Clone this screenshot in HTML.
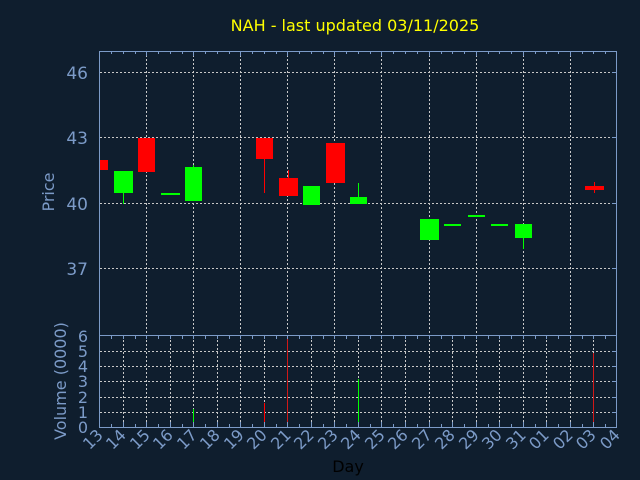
<!DOCTYPE html>
<html><head><style>
html,body{margin:0;padding:0;background:#0f1e2e;}
svg{display:block;}
text{font-family:"DejaVu Sans","Liberation Sans",sans-serif;}
</style></head><body>
<svg width="640" height="480" viewBox="0 0 640 480" xmlns="http://www.w3.org/2000/svg">
<rect width="640" height="480" fill="#0f1e2e"/>
<text x="355" y="31" fill="#ffff00" font-size="16" text-anchor="middle">NAH - last updated 03/11/2025</text>
<g stroke="#c8c8c8" stroke-width="1" stroke-dasharray="2,2" fill="none">
<line x1="100" y1="72.5" x2="617" y2="72.5"/>
<line x1="100" y1="137.5" x2="617" y2="137.5"/>
<line x1="100" y1="203.5" x2="617" y2="203.5"/>
<line x1="100" y1="268.5" x2="617" y2="268.5"/>
<line x1="146.5" y1="51" x2="146.5" y2="335"/>
<line x1="193.5" y1="51" x2="193.5" y2="335"/>
<line x1="240.5" y1="51" x2="240.5" y2="335"/>
<line x1="287.5" y1="51" x2="287.5" y2="335"/>
<line x1="334.5" y1="51" x2="334.5" y2="335"/>
<line x1="381.5" y1="51" x2="381.5" y2="335"/>
<line x1="429.5" y1="51" x2="429.5" y2="335"/>
<line x1="476.5" y1="51" x2="476.5" y2="335"/>
<line x1="523.5" y1="51" x2="523.5" y2="335"/>
<line x1="570.5" y1="51" x2="570.5" y2="335"/>
</g>
<g stroke="#c8c8c8" stroke-width="1" stroke-dasharray="2,2" fill="none">
<line x1="100" y1="351.5" x2="617" y2="351.5"/>
<line x1="100" y1="366.5" x2="617" y2="366.5"/>
<line x1="100" y1="381.5" x2="617" y2="381.5"/>
<line x1="100" y1="397.5" x2="617" y2="397.5"/>
<line x1="100" y1="412.5" x2="617" y2="412.5"/>
<line x1="123.5" y1="336" x2="123.5" y2="427"/><line x1="146.5" y1="336" x2="146.5" y2="427"/><line x1="170.5" y1="336" x2="170.5" y2="427"/><line x1="193.5" y1="336" x2="193.5" y2="427"/><line x1="217.5" y1="336" x2="217.5" y2="427"/><line x1="240.5" y1="336" x2="240.5" y2="427"/><line x1="264.5" y1="336" x2="264.5" y2="427"/><line x1="287.5" y1="336" x2="287.5" y2="427"/><line x1="311.5" y1="336" x2="311.5" y2="427"/><line x1="334.5" y1="336" x2="334.5" y2="427"/><line x1="358.5" y1="336" x2="358.5" y2="427"/><line x1="381.5" y1="336" x2="381.5" y2="427"/><line x1="405.5" y1="336" x2="405.5" y2="427"/><line x1="429.5" y1="336" x2="429.5" y2="427"/><line x1="452.5" y1="336" x2="452.5" y2="427"/><line x1="476.5" y1="336" x2="476.5" y2="427"/><line x1="499.5" y1="336" x2="499.5" y2="427"/><line x1="523.5" y1="336" x2="523.5" y2="427"/><line x1="546.5" y1="336" x2="546.5" y2="427"/><line x1="570.5" y1="336" x2="570.5" y2="427"/><line x1="593.5" y1="336" x2="593.5" y2="427"/>
</g>
<g>
<rect x="99" y="160" width="9" height="10" fill="#ff0000"/>
<line x1="123.5" y1="193" x2="123.5" y2="204" stroke="#00ff00"/><rect x="114" y="171" width="19" height="22" fill="#00ff00"/>
<rect x="138" y="138" width="17" height="34" fill="#ff0000"/>
<rect x="161" y="193" width="19" height="2" fill="#00ff00"/>
<line x1="193.5" y1="165" x2="193.5" y2="170" stroke="#00ff00"/><rect x="185" y="167" width="17" height="34" fill="#00ff00"/>
<line x1="264.5" y1="158" x2="264.5" y2="193" stroke="#ff0000"/><rect x="256" y="138" width="17" height="21" fill="#ff0000"/>
<line x1="288.5" y1="170" x2="288.5" y2="180" stroke="#ff0000"/><rect x="279" y="178" width="19" height="18" fill="#ff0000"/>
<rect x="303" y="186" width="17" height="19" fill="#00ff00"/>
<rect x="326" y="143" width="19" height="40" fill="#ff0000"/>
<line x1="358.5" y1="183" x2="358.5" y2="198" stroke="#00ff00"/><rect x="350" y="197" width="17" height="7" fill="#00ff00"/>
<rect x="420" y="219" width="19" height="21" fill="#00ff00"/>
<rect x="444" y="224" width="17" height="2" fill="#00ff00"/>
<rect x="468" y="215" width="17" height="2" fill="#00ff00"/>
<rect x="491" y="224" width="17" height="2" fill="#00ff00"/>
<line x1="523.5" y1="237" x2="523.5" y2="249" stroke="#00ff00"/><rect x="515" y="224" width="17" height="14" fill="#00ff00"/>
<line x1="594.5" y1="182" x2="594.5" y2="193" stroke="#ff0000"/><rect x="585" y="186" width="19" height="4" fill="#ff0000"/>
</g>
<g stroke-width="1">
<line x1="123.5" y1="423" x2="123.5" y2="427" stroke="#00ff00"/>
<line x1="193.5" y1="409" x2="193.5" y2="427" stroke="#00ff00"/>
<line x1="264.5" y1="403" x2="264.5" y2="427" stroke="#ff0000"/>
<line x1="287.5" y1="336" x2="287.5" y2="427" stroke="#d01818"/>
<line x1="311.5" y1="425" x2="311.5" y2="427" stroke="#00ff00"/>
<line x1="358.5" y1="379" x2="358.5" y2="427" stroke="#00ff00"/>
<line x1="429.5" y1="425" x2="429.5" y2="427" stroke="#00ff00"/>
<line x1="523.5" y1="422" x2="523.5" y2="427" stroke="#00ff00"/>
<line x1="593.5" y1="353" x2="593.5" y2="427" stroke="#d01818"/>
</g>
<g stroke="#7c9bc8" stroke-width="1" fill="none">
<rect x="99.5" y="51.5" width="517" height="284"/>
<rect x="99.5" y="335.5" width="517" height="92"/>
</g>
<g stroke="#7c9bc8" stroke-width="1">
<path d="M111.5 51v3M123.5 51v3M135.5 51v3M146.5 51v5M158.5 51v3M170.5 51v3M182.5 51v3M193.5 51v5M205.5 51v3M217.5 51v3M229.5 51v3M240.5 51v5M252.5 51v3M264.5 51v3M276.5 51v3M287.5 51v5M299.5 51v3M311.5 51v3M323.5 51v3M334.5 51v5M346.5 51v3M358.5 51v3M370.5 51v3M381.5 51v5M393.5 51v3M405.5 51v3M417.5 51v3M429.5 51v5M441.5 51v3M452.5 51v3M464.5 51v3M476.5 51v5M488.5 51v3M499.5 51v3M511.5 51v3M523.5 51v5M535.5 51v3M546.5 51v3M558.5 51v3M570.5 51v5M582.5 51v3M593.5 51v3M605.5 51v3"/>
<path d="M111.5 427v-3M123.5 427v-5M135.5 427v-3M146.5 427v-5M158.5 427v-3M170.5 427v-5M182.5 427v-3M193.5 427v-5M205.5 427v-3M217.5 427v-5M229.5 427v-3M240.5 427v-5M252.5 427v-3M264.5 427v-5M276.5 427v-3M287.5 427v-5M299.5 427v-3M311.5 427v-5M323.5 427v-3M334.5 427v-5M346.5 427v-3M358.5 427v-5M370.5 427v-3M381.5 427v-5M393.5 427v-3M405.5 427v-5M417.5 427v-3M429.5 427v-5M441.5 427v-3M452.5 427v-5M464.5 427v-3M476.5 427v-5M488.5 427v-3M499.5 427v-5M511.5 427v-3M523.5 427v-5M535.5 427v-3M546.5 427v-5M558.5 427v-3M570.5 427v-5M582.5 427v-3M593.5 427v-5M605.5 427v-3"/>
<path d="M111.5 336v3M123.5 336v3M135.5 336v3M146.5 336v3M158.5 336v3M170.5 336v3M182.5 336v3M193.5 336v3M205.5 336v3M217.5 336v3M229.5 336v3M240.5 336v3M252.5 336v3M264.5 336v3M276.5 336v3M287.5 336v3M299.5 336v3M311.5 336v3M323.5 336v3M334.5 336v3M346.5 336v3M358.5 336v3M370.5 336v3M381.5 336v3M393.5 336v3M405.5 336v3M417.5 336v3M429.5 336v3M441.5 336v3M452.5 336v3M464.5 336v3M476.5 336v3M488.5 336v3M499.5 336v3M511.5 336v3M523.5 336v3M535.5 336v3M546.5 336v3M558.5 336v3M570.5 336v3M582.5 336v3M593.5 336v3M605.5 336v3"/>
<path d="M612 72.5h5M612 137.5h5M612 203.5h5M612 268.5h5"/>
<path d="M612 351.5h5M612 366.5h5M612 381.5h5M612 397.5h5M612 412.5h5"/>
</g>
<g fill="#7c9bc8" font-size="17" text-anchor="end">
<text x="88" y="79">46</text>
<text x="88" y="144">43</text>
<text x="88" y="210">40</text>
<text x="88" y="275">37</text>
</g>
<g fill="#7c9bc8" font-size="16" text-anchor="end">
<text x="88" y="342">6</text><text x="88" y="357">5</text><text x="88" y="372">4</text><text x="88" y="387">3</text><text x="88" y="403">2</text><text x="88" y="418">1</text><text x="88" y="433">0</text>
</g>
<text transform="translate(54,192) rotate(-90)" fill="#7c9bc8" font-size="16" text-anchor="middle">Price</text>
<text transform="translate(66,381) rotate(-90)" fill="#7c9bc8" font-size="16" text-anchor="middle">Volume (0000)</text>
<g fill="#7c9bc8" font-size="16" text-anchor="end">
<text transform="translate(104,436) rotate(-45)">13</text>
<text transform="translate(127,436) rotate(-45)">14</text>
<text transform="translate(151,436) rotate(-45)">15</text>
<text transform="translate(174,436) rotate(-45)">16</text>
<text transform="translate(198,436) rotate(-45)">17</text>
<text transform="translate(221,436) rotate(-45)">18</text>
<text transform="translate(245,436) rotate(-45)">19</text>
<text transform="translate(268,436) rotate(-45)">20</text>
<text transform="translate(292,436) rotate(-45)">21</text>
<text transform="translate(315,436) rotate(-45)">22</text>
<text transform="translate(339,436) rotate(-45)">23</text>
<text transform="translate(362,436) rotate(-45)">24</text>
<text transform="translate(386,436) rotate(-45)">25</text>
<text transform="translate(409,436) rotate(-45)">26</text>
<text transform="translate(433,436) rotate(-45)">27</text>
<text transform="translate(456,436) rotate(-45)">28</text>
<text transform="translate(480,436) rotate(-45)">29</text>
<text transform="translate(503,436) rotate(-45)">30</text>
<text transform="translate(527,436) rotate(-45)">31</text>
<text transform="translate(550,436) rotate(-45)">01</text>
<text transform="translate(574,436) rotate(-45)">02</text>
<text transform="translate(597,436) rotate(-45)">03</text>
<text transform="translate(621,436) rotate(-45)">04</text>
</g>
<text x="348" y="472" fill="#000000" font-size="16" text-anchor="middle">Day</text>
</svg>
</body></html>
